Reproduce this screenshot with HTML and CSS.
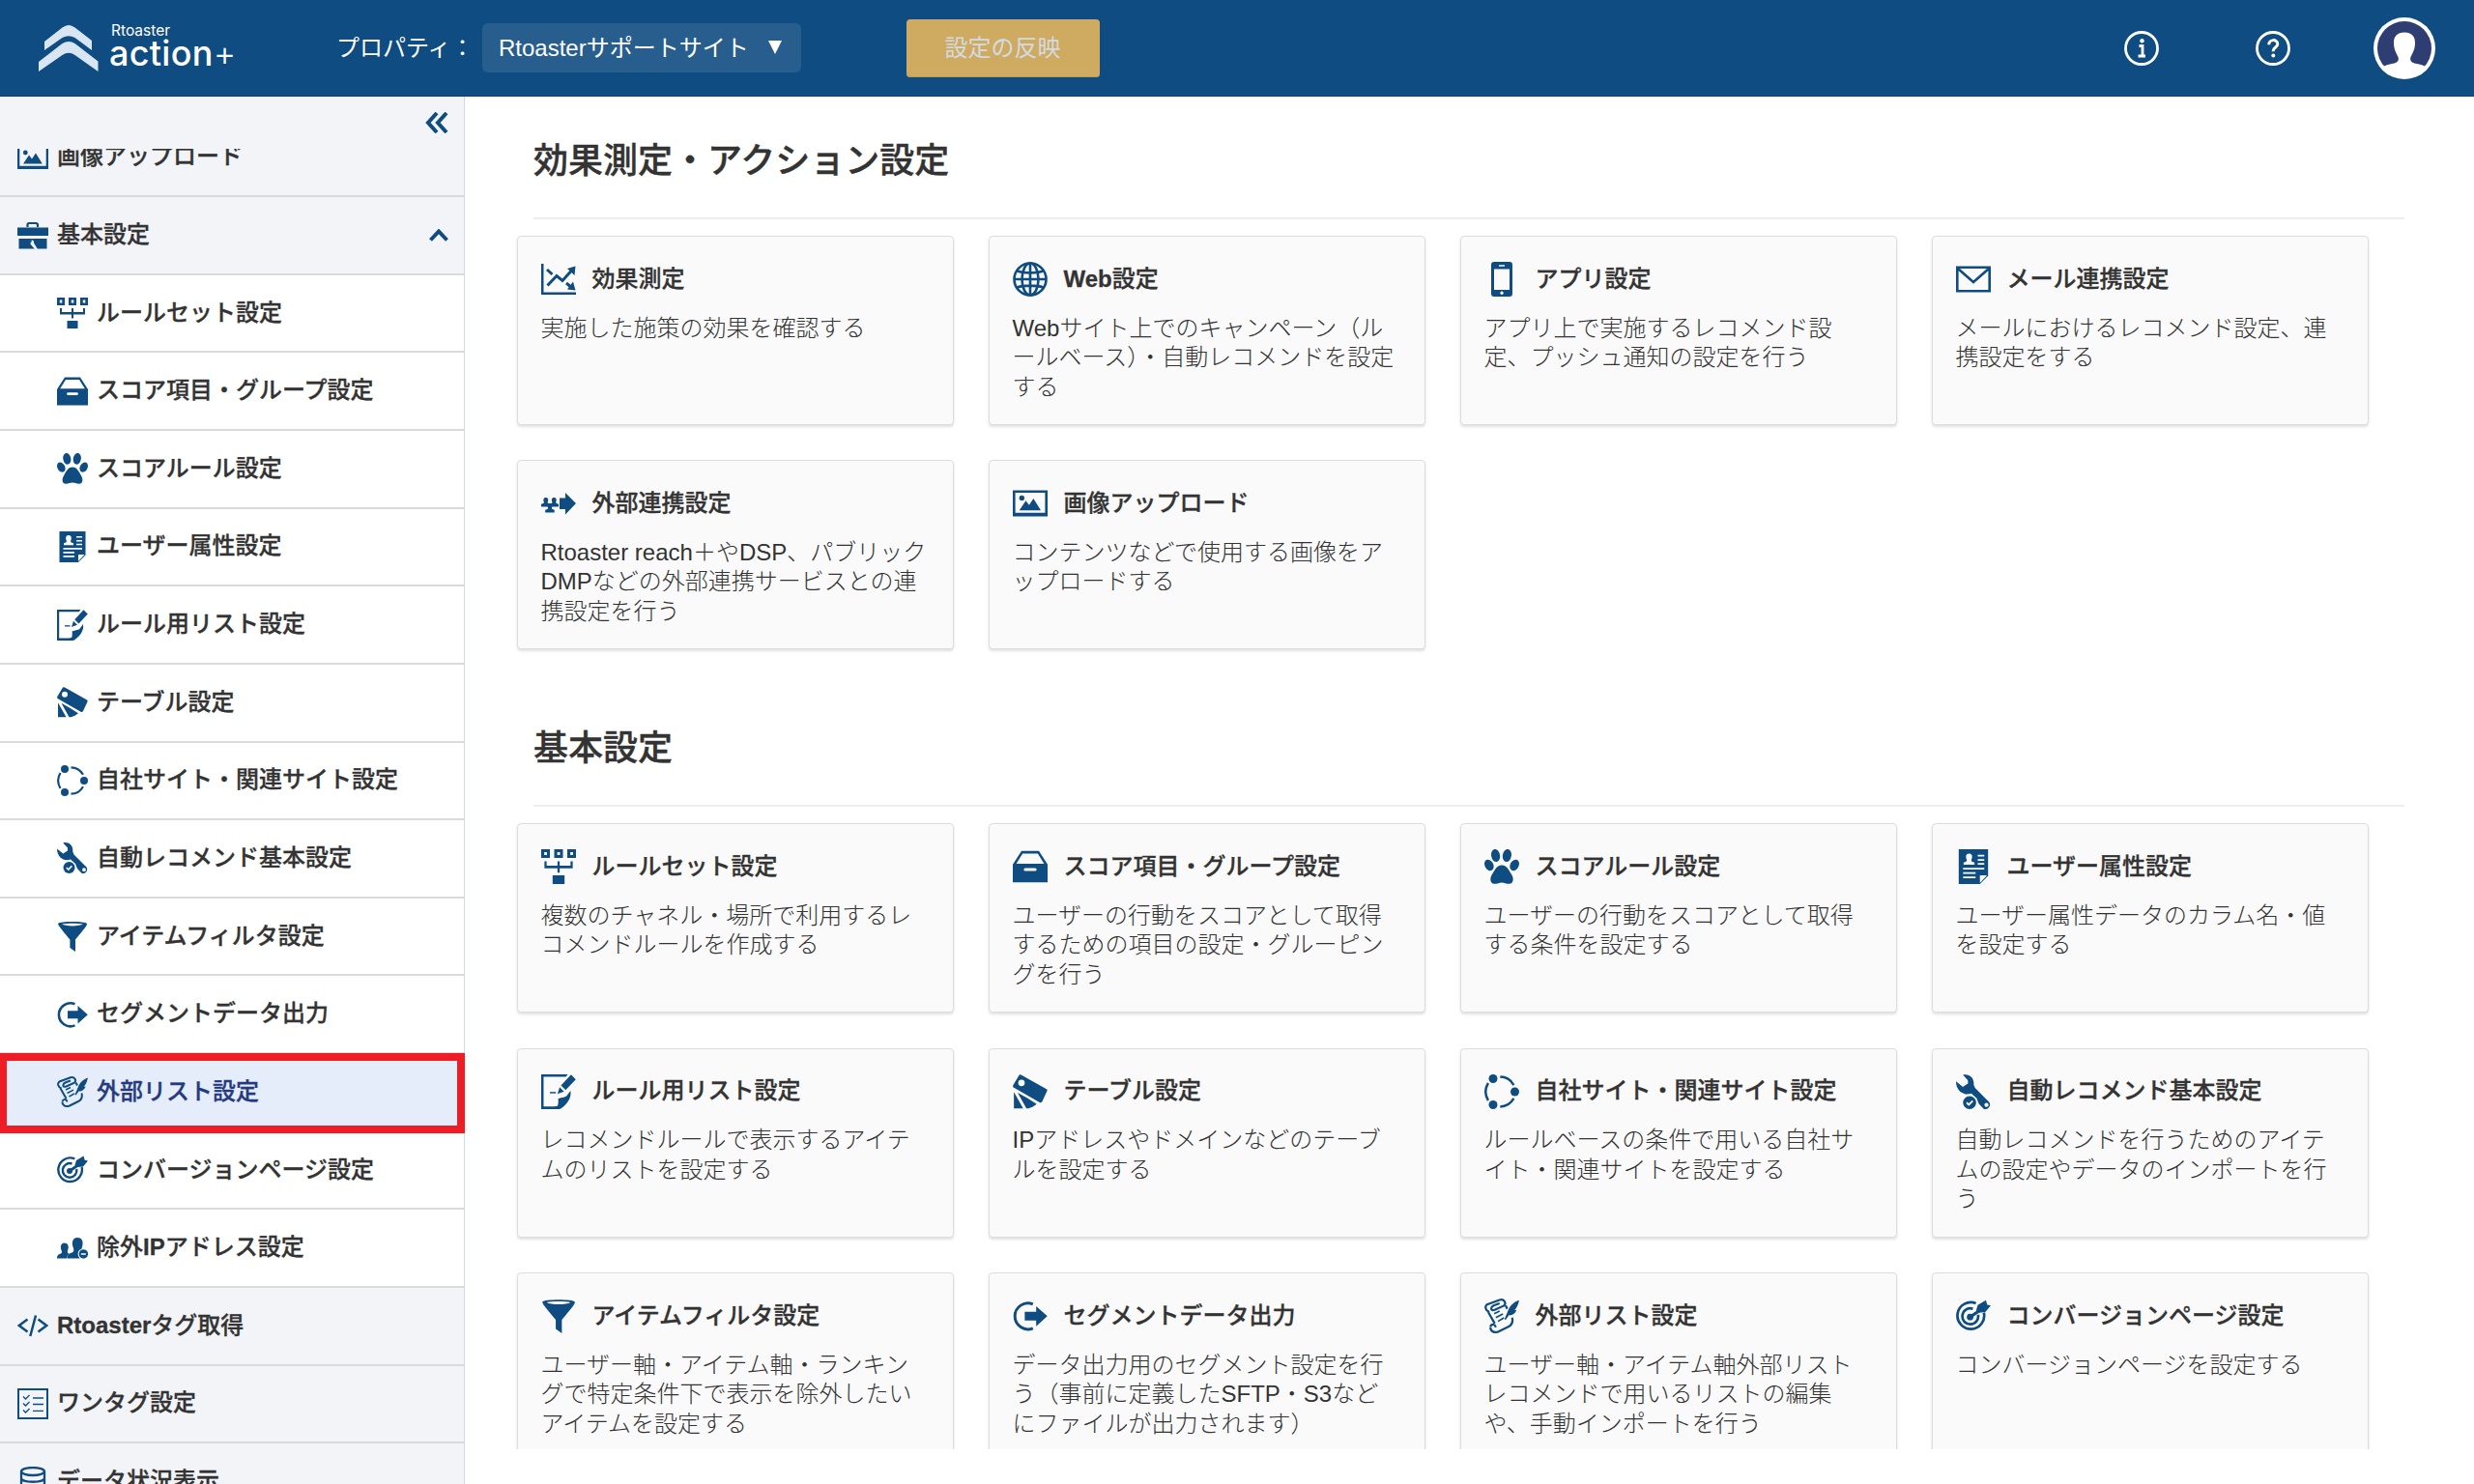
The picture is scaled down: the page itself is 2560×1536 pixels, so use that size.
FILE: index.html
```
<!DOCTYPE html>
<html lang="ja">
<head>
    <meta charset="UTF-8">
    <meta name="viewport" content="width=device-width, initial-scale=1.0">
    <title>Rtoaster action+</title>
    <link rel="stylesheet" href="styles.css">
</head>
<body>

    <!-- Icon set -->
    <svg class="icon-set" aria-hidden="true">
        <symbol id="i-ruleset" viewBox="0 0 32 32">
            <path fill-rule="evenodd" d="M0 0h8v8H0zM2.8 2.6v2.8h2.5V2.6zM12 0h8v8h-8zM14.8 2.6v2.8h2.5V2.6zM24 0h8v8h-8zM26.8 2.6v2.8h2.5V2.6z"/>
            <path d="M3 11h2v4h10v-4h2v4h10v-4h2v6.5H17v4h-2v-4H3zM10.5 24h11v8h-11z"/>
        </symbol>
        <symbol id="i-box" viewBox="0 0 32 32">
            <path fill-rule="evenodd" d="M8 1.500h16l8 12.500v16.500H0V14zM9 4L3.200 13.300h25.600L23 4zM11.500 17.300a1.400 1.400 0 0 0 0 2.800h9a1.400 1.400 0 0 0 0-2.800z"/>
        </symbol>
        <symbol id="i-paw" viewBox="0 0 32 32">
            <ellipse cx="10.300" cy="5.800" rx="4" ry="5.900" transform="rotate(-10 10.300 5.800)"/>
            <ellipse cx="20.800" cy="5.800" rx="4" ry="5.900" transform="rotate(10 20.800 5.800)"/>
            <ellipse cx="4.300" cy="14.600" rx="3.900" ry="5.400" transform="rotate(-28 4.300 14.600)"/>
            <ellipse cx="27.700" cy="14.600" rx="3.900" ry="5.400" transform="rotate(28 27.700 14.600)"/>
            <path d="M16 14.600c5 0 6.500 5 8.800 8.300 2.600 3.800 2 8.600-1.800 8.900-2.500.2-4.500-1.200-7-1.200s-4.500 1.400-7 1.200c-3.800-.3-4.400-5.100-1.800-8.900C9.500 19.600 11 14.600 16 14.600z"/>
        </symbol>
        <symbol id="i-user" viewBox="0 0 32 32">
            <path d="M2.500 0h27v24.500L22 32H2.500z"/>
            <path class="hole" d="M12 4c3.200 0 3.300 3.200 2.200 5.600-.4 1.500.2 2 2.800 2.600v2H7v-2c2.600-.6 3.200-1.100 2.800-2.600C8.700 7.200 8.800 4 12 4zM20 5h6v1.600h-6zM20 9h6v1.600h-6zM20 12.700h6v1.600h-6zM6.500 17H26v1.700H6.500zM6.500 21H18v1.700H6.500zM6.500 25H18v1.700H6.500zM22 31v-7h6.500z"/>
        </symbol>
        <symbol id="i-edit" viewBox="0 0 32 32">
            <path d="M0 0h24.500l-1.800 2.200H2.200v27.400H12l3-.6c1-1.500.8-4.500.6-6.500 3.500-1.500 7.500-1 8.800-4l2.600-3.500c1 7-3 12-9 16.500-1 .5-2 .5-3 .5H0z"/>
            <path d="M27.500.3L31.800 4.600 22.500 14.400 18.200 10.200zM17 11.700l4 4-6 2.400z"/>
            <path d="M8 16.200h5.500v1.300H8z"/>
        </symbol>
        <symbol id="i-swatch" viewBox="0 0 32 32">
            <path fill-rule="evenodd" d="M6 .5Q7 0 8 .6L31 13.500Q32 14.200 31.500 15.300L27 25Q26 26.300 24.600 25.700L1 12.300Q-.3 11.500.3 10zM8 4.800a3 3 0 1 0 0 6 3 3 0 1 0 0-6z"/>
            <path d="M1 16.300L9.500 31.300H1zM4.500 16.800l8.800 5L22 27.300l-3.500 2.500-4 1.500h-2z"/>
        </symbol>
        <symbol id="i-sites" viewBox="0 0 32 32">
            <circle cx="8" cy="4" r="4"/><circle cx="28" cy="16" r="4"/><circle cx="8" cy="28" r="4"/>
            <path class="line" stroke-width="2.200" d="M14.500 2.300C20 2.300 24.500 5.500 27 9.800M27 22.200C24.500 26.500 20 29.700 14.500 29.700M3.500 8C.5 13 .5 19 3.500 24"/>
        </symbol>
        <symbol id="i-wrench" viewBox="0 0 32 32">
            <path fill-rule="evenodd" d="M6.300.4C12-1 17 3 16.300 9.500l1.200 3L30.500 25.500a4.200 4.200 0 0 1-5 6.200L21 27l-2-5-5-4.500C8 20 0 16 0 6.500L6.300 11.500 11 8.500V5.500zM28 26.300a1.900 1.900 0 1 0 0 3.800 1.900 1.900 0 1 0 0-3.800z"/>
            <circle cx="12.500" cy="26" r="7" class="hole"/>
            <circle cx="12.500" cy="26" r="6"/>
            <path class="hole-line" d="M9.800 26l2 2 3.600-3.700"/>
        </symbol>
        <symbol id="i-filter" viewBox="0 0 32 32">
            <path fill-rule="evenodd" d="M1 3C3 .4 29 .4 31 3c0 2-1 3.500-12 16.500V32l-5.600-4V19.500C3 7 1.500 5 1 3zM5 3.600C9 6 23 6 27 3.600 22 2.300 10 2.300 5 3.600z"/>
        </symbol>
        <symbol id="i-export" viewBox="0 0 32 32">
            <path class="line" stroke-width="2.600" d="M18.500 5.200A12 12 0 1 0 18.500 27.400"/>
            <path d="M11 12.200h10.500V7L31.800 16.200 21.500 25.500V20.300H11z"/>
        </symbol>
        <symbol id="i-scroll" viewBox="0 0 32 32">
            <g class="line" stroke-width="2">
                <path d="M4.500 12.500C1 11 0 7.500 2.500 5.500L14 1.300c4-1.300 6.500 3 4 5.300L9.500 10.500C5.500 12 5.500 8 8.500 6.500L14 4.500"/>
                <path d="M3.500 12.500L9.500 23M19.500 6.500L21 9.500M5.500 26c1-3 5-2.500 4.600.5M5.500 26.500c0 4 4 5.500 7.500 4L22 26c3-1.500 4.500-4.500 3.500-8.500"/>
            </g>
            <path class="line" stroke-width="1.500" d="M9 14l5-2.500M10.500 17.500l6.500-3.300M12.500 21l5.500-3.200"/>
            <path d="M32 1.500c-3 .8-7 3.500-9 7-1.500 3-2 5-4.500 10.500l1.200.6 2.800-4.200c2.500.6 6.500-2 7-5l-1.800.4c2-2 3.500-5.300 4.300-9.300z"/>
        </symbol>
        <symbol id="i-target" viewBox="0 0 32 32">
            <g class="line" stroke-width="2.400">
                <path d="M18.300 4.400A12.300 12.300 0 1 0 25.600 13"/>
                <path d="M15.500 9.500A7.300 7.300 0 1 0 20.300 15"/>
                <path stroke-width="2.800" d="M13 17L24 9.500"/>
            </g>
            <circle cx="13" cy="17" r="3"/>
            <path d="M18.500 11l1.500-5 7.500-4.500 1.200 4.300 3.300.7-5 6-6 .5z"/>
        </symbol>
        <symbol id="i-exclude" viewBox="0 0 32 32">
            <path d="M7.500 10.500c4.500 0 5 4.500 3.500 8-.7 2 0 2.700 2.500 3.500l-2.500 1-1 3.500H0c0-3.500 1.500-4 4-5 1.500-.8 1-2 .5-3.500-1.300-3.500-.5-7.500 3-7.500z"/>
            <path d="M21 5c5.500 0 6.500 5 5 9.500-.5 1.500-.8 2.500.3 3.300-3.300 1.200-4.300 5-2.600 8.700H10.500c0-4 2-5 5.500-6.300 1.500-.7 1.500-2.700 1-4.200C15 11 15.500 5 21 5z"/>
            <circle class="hole" cx="27.300" cy="21.900" r="5.700"/>
            <path fill-rule="evenodd" d="M27.300 17.200a4.700 4.700 0 1 0 .1 0zM24.800 21.200h5v1.500h-5z"/>
        </symbol>
        <symbol id="i-image" viewBox="0 0 32 32">
            <path fill-rule="evenodd" d="M0 4h32v24H0zM2.300 6.200v18.500h27.400V6.200z"/>
            <circle cx="8.300" cy="11" r="2.400"/>
            <path d="M6 22.500L12 13.500l3 4 4-6 6.800 11z"/>
        </symbol>
        <symbol id="i-toolbox" viewBox="0 0 32 32">
            <path class="line" stroke-width="2.200" d="M10.500 8V5.500Q10.500 4 12 4h7Q21 4 21 5.500V8"/>
            <path d="M0 8.500h32v8.500H0zM1.500 20h29V30.500h-29z"/>
            <path class="hole" d="M12 21l2 2.500-.6 2L18 31h3l-4-6.500c.5-2-1-3-2.500-3.300l.5 2-1.200.4z"/>
        </symbol>
        <symbol id="i-code" viewBox="0 0 32 32">
            <path class="line" stroke-width="2.500" d="M10.500 9.500L1.800 16l8.700 6.500M21.500 9.500L30.200 16l-8.700 6.500M19 5.500L13.300 27"/>
        </symbol>
        <symbol id="i-checklist" viewBox="0 0 32 32">
            <path class="line" stroke-width="2" d="M1 1h30v30H1z"/>
            <path class="line" stroke-width="1.300" d="M6 8.500l2.500 2.500 4-4M6 15.500l2.500 2.500 4-4M6 22.500l2.500 2.500 4-4M16 10h11M16 16.500h11M16 23.300h11"/>
        </symbol>
        <symbol id="i-db" viewBox="0 0 32 32">
            <g class="line" stroke-width="2.300">
                <ellipse cx="16" cy="5" rx="12" ry="4"/>
                <path d="M4 5v22c0 5 24 5 24 0V5M4 12c0 5 24 5 24 0M4 19.500c0 5 24 5 24 0"/>
            </g>
        </symbol>
        <symbol id="i-chart" viewBox="0 0 36 36">
            <path d="M0 2h2.500v29.500H36V34H0z"/>
            <path class="line" stroke-width="3" d="M6.500 24.500L16 14.500l6 5L31.500 9M6 8l5.500 5M26 22l6 5"/>
            <path d="M35.500 4.500l-1 9.500-7.500-7zM35.500 29.500l-8.500-1 6-8z"/>
        </symbol>
        <symbol id="i-globe" viewBox="0 0 36 36">
            <g class="line" stroke-width="2.600">
                <circle cx="18" cy="18" r="16.500"/>
                <ellipse cx="18" cy="18" rx="8.500" ry="16.500"/>
                <path d="M18 1v34M1 18h34M4.500 9.500C11 12 25 12 31.500 9.500M4.500 26.500C11 24 25 24 31.500 26.500"/>
            </g>
        </symbol>
        <symbol id="i-phone" viewBox="0 0 36 36">
            <path fill-rule="evenodd" d="M10 0h16a3 3 0 0 1 3 3v30a3 3 0 0 1-3 3H10a3 3 0 0 1-3-3V3a3 3 0 0 1 3-3zM10 7.500v21.500h16V7.500zM15 3.200v1.600h6V3.200zM18 30.500a1.700 1.700 0 1 0 .1 0z"/>
        </symbol>
        <symbol id="i-mail" viewBox="0 0 36 36">
            <path class="line" stroke-width="2.600" d="M1.300 5.800h33.400v24.400H1.300zM2 7l16 14L34 7"/>
        </symbol>
        <symbol id="i-link" viewBox="0 0 36 36">
            <path id="person" d="M4.800 12c2.600 0 2.900 2.500 2 4.500-.4 1.200.2 1.600 2.700 2.200v2.800H0v-2.800c2.600-.6 3.200-1 2.800-2.200C2 14.500 2.200 12 4.800 12z"/>
            <use href="#person" x="8.500"/>
            <use href="#person" x="4.200" y="6"/>
            <path d="M19 12.500h6V7L36 18 25 29.500V24h-6z"/>
        </symbol>
    </svg>

    <!-- Header -->
    <header class="header">
        <div class="logo">
            <svg class="logo-mark" viewBox="0 0 62 48">
                <path d="M6 17L24.500 2.500Q31-2.500 37.500 2.500L55 16V26L37.500 13Q31 9.500 24.500 13L6 26z"/>
                <path d="M0 38L24.500 19Q31 15 37.500 19L61.500 37.500V48L37.500 31Q31 26.500 24.500 31L0 48z"/>
            </svg>
            <div class="logo-text">
                <span class="logo-small">Rtoaster</span>
                <span class="logo-large">action<span class="plus">+</span></span>
            </div>
        </div>
        <div class="property">
            <span>プロパティ：</span>
            <div class="property-select"><span>Rtoasterサポートサイト</span><i class="caret"></i></div>
        </div>
        <button class="btn-apply" disabled>設定の反映</button>
        <div class="header-icons">
            <svg class="round-icon" viewBox="0 0 36 36">
                <circle cx="18" cy="18" r="16.500"/>
                <circle class="dot" cx="18.500" cy="10.300" r="2.200"/>
                <path d="M15.500 15.500h3.500v10M14.500 26h7.500"/>
            </svg>
            <svg class="round-icon" viewBox="0 0 36 36">
                <circle cx="18" cy="18" r="16.500"/>
                <path stroke-width="3" d="M13.800 14.300c0-6.400 9-5.800 9-.8 0 3.800-4.800 3.200-4.800 7.700"/>
                <circle class="dot" cx="18.300" cy="25.600" r="2"/>
            </svg>
            <svg class="avatar" viewBox="0 0 64 64">
                <circle cx="32" cy="32" r="32" fill="#fff"/>
                <circle cx="32" cy="32" r="28" fill="#2e3e73"/>
                <path fill="#fff" d="M32 15.500c8 0 11.500 5 11 12-.4 6.500-2.500 9-4.500 13.500-1 3 0 5.500 4 6.500 5 1 9 1.500 12 4A28.500 28.500 0 0 1 9.500 51.500c3-2.500 7-3 12-4 4-1 5-3.500 4-6.500-2-4.500-4.100-7-4.500-13.500-.5-7 3-12 11-12z"/>
            </svg>
        </div>
    </header>

    <div class="layout">

        <!-- Side menu -->
        <aside class="sidebar">
            <div class="sidebar-toggle">
                <svg viewBox="0 0 24 22"><path d="M12 1L3 11l9 10M22 1l-9 10 9 10"/></svg>
            </div>
            <nav class="menu">
                <ul class="menu-list">
                    <li class="top"><svg class="icon"><use href="#i-image"/></svg><span>画像アップロード</span></li>
                    <li class="top"><svg class="icon"><use href="#i-toolbox"/></svg><span>基本設定</span><svg class="chevron" viewBox="0 0 20 13"><path d="M1.500 11.500L10 2.500l8.500 9"/></svg></li>
                    <li><svg class="icon"><use href="#i-ruleset"/></svg><span>ルールセット設定</span></li>
                    <li><svg class="icon"><use href="#i-box"/></svg><span>スコア項目・グループ設定</span></li>
                    <li><svg class="icon"><use href="#i-paw"/></svg><span>スコアルール設定</span></li>
                    <li><svg class="icon"><use href="#i-user"/></svg><span>ユーザー属性設定</span></li>
                    <li><svg class="icon"><use href="#i-edit"/></svg><span>ルール用リスト設定</span></li>
                    <li><svg class="icon"><use href="#i-swatch"/></svg><span>テーブル設定</span></li>
                    <li><svg class="icon"><use href="#i-sites"/></svg><span>自社サイト・関連サイト設定</span></li>
                    <li><svg class="icon"><use href="#i-wrench"/></svg><span>自動レコメンド基本設定</span></li>
                    <li><svg class="icon"><use href="#i-filter"/></svg><span>アイテムフィルタ設定</span></li>
                    <li><svg class="icon"><use href="#i-export"/></svg><span>セグメントデータ出力</span></li>
                    <li class="active"><svg class="icon"><use href="#i-scroll"/></svg><span>外部リスト設定</span></li>
                    <li><svg class="icon"><use href="#i-target"/></svg><span>コンバージョンページ設定</span></li>
                    <li><svg class="icon"><use href="#i-exclude"/></svg><span>除外<b>IP</b>アドレス設定</span></li>
                    <li class="top"><svg class="icon"><use href="#i-code"/></svg><span><b>Rtoaster</b>タグ取得</span></li>
                    <li class="top"><svg class="icon"><use href="#i-checklist"/></svg><span>ワンタグ設定</span></li>
                    <li class="top"><svg class="icon"><use href="#i-db"/></svg><span>データ状況表示</span></li>
                </ul>
            </nav>
        </aside>

        <!-- Contents -->
        <main class="content">
            <section>
                <h2>効果測定・アクション設定</h2>
                <div class="cards">
                    <div class="card">
                        <h3><svg class="icon"><use href="#i-chart"/></svg><span>効果測定</span></h3>
                        <p>実施した施策の効果を確認する</p>
                    </div>
                    <div class="card">
                        <h3><svg class="icon"><use href="#i-globe"/></svg><span><b>Web</b>設定</span></h3>
                        <p>Webサイト上でのキャンペーン（ル<br>ールベース）・自動レコメンドを設定<br>する</p>
                    </div>
                    <div class="card">
                        <h3><svg class="icon"><use href="#i-phone"/></svg><span>アプリ設定</span></h3>
                        <p>アプリ上で実施するレコメンド設<br>定、プッシュ通知の設定を行う</p>
                    </div>
                    <div class="card">
                        <h3><svg class="icon"><use href="#i-mail"/></svg><span>メール連携設定</span></h3>
                        <p>メールにおけるレコメンド設定、連<br>携設定をする</p>
                    </div>
                    <div class="card">
                        <h3><svg class="icon"><use href="#i-link"/></svg><span>外部連携設定</span></h3>
                        <p>Rtoaster reach＋やDSP、パブリック<br>DMPなどの外部連携サービスとの連<br>携設定を行う</p>
                    </div>
                    <div class="card">
                        <h3><svg class="icon"><use href="#i-image"/></svg><span>画像アップロード</span></h3>
                        <p>コンテンツなどで使用する画像をア<br>ップロードする</p>
                    </div>
                </div>
            </section>
            <section>
                <h2>基本設定</h2>
                <div class="cards">
                    <div class="card">
                        <h3><svg class="icon"><use href="#i-ruleset"/></svg><span>ルールセット設定</span></h3>
                        <p>複数のチャネル・場所で利用するレ<br>コメンドルールを作成する</p>
                    </div>
                    <div class="card">
                        <h3><svg class="icon"><use href="#i-box"/></svg><span>スコア項目・グループ設定</span></h3>
                        <p>ユーザーの行動をスコアとして取得<br>するための項目の設定・グルーピン<br>グを行う</p>
                    </div>
                    <div class="card">
                        <h3><svg class="icon"><use href="#i-paw"/></svg><span>スコアルール設定</span></h3>
                        <p>ユーザーの行動をスコアとして取得<br>する条件を設定する</p>
                    </div>
                    <div class="card">
                        <h3><svg class="icon"><use href="#i-user"/></svg><span>ユーザー属性設定</span></h3>
                        <p>ユーザー属性データのカラム名・値<br>を設定する</p>
                    </div>
                    <div class="card">
                        <h3><svg class="icon"><use href="#i-edit"/></svg><span>ルール用リスト設定</span></h3>
                        <p>レコメンドルールで表示するアイテ<br>ムのリストを設定する</p>
                    </div>
                    <div class="card">
                        <h3><svg class="icon"><use href="#i-swatch"/></svg><span>テーブル設定</span></h3>
                        <p>IPアドレスやドメインなどのテーブ<br>ルを設定する</p>
                    </div>
                    <div class="card">
                        <h3><svg class="icon"><use href="#i-sites"/></svg><span>自社サイト・関連サイト設定</span></h3>
                        <p>ルールベースの条件で用いる自社サ<br>イト・関連サイトを設定する</p>
                    </div>
                    <div class="card">
                        <h3><svg class="icon"><use href="#i-wrench"/></svg><span>自動レコメンド基本設定</span></h3>
                        <p>自動レコメンドを行うためのアイテ<br>ムの設定やデータのインポートを行<br>う</p>
                    </div>
                    <div class="card">
                        <h3><svg class="icon"><use href="#i-filter"/></svg><span>アイテムフィルタ設定</span></h3>
                        <p>ユーザー軸・アイテム軸・ランキン<br>グで特定条件下で表示を除外したい<br>アイテムを設定する</p>
                    </div>
                    <div class="card">
                        <h3><svg class="icon"><use href="#i-export"/></svg><span>セグメントデータ出力</span></h3>
                        <p>データ出力用のセグメント設定を行<br>う（事前に定義したSFTP・S3など<br>にファイルが出力されます）</p>
                    </div>
                    <div class="card">
                        <h3><svg class="icon"><use href="#i-scroll"/></svg><span>外部リスト設定</span></h3>
                        <p>ユーザー軸・アイテム軸外部リスト<br>レコメンドで用いるリストの編集<br>や、手動インポートを行う</p>
                    </div>
                    <div class="card">
                        <h3><svg class="icon"><use href="#i-target"/></svg><span>コンバージョンページ設定</span></h3>
                        <p>コンバージョンページを設定する</p>
                    </div>
                </div>
            </section>
        </main>
    </div>

</body>
</html>
```
FILE: styles.css
```
/* Reset default styles */
*,
*::after {
    margin: 0;
    padding: 0;
    box-sizing: border-box;
}

body {
    font-family: "Liberation Sans", "Noto Sans CJK JP", sans-serif;
    font-size: 24px;
    color: #333;
    background-color: #fff;
    height: 1536px;
    overflow: hidden;
}

.icon-set {
    display: none;
}

.icon {
    --hole: #fff;
    fill: #0f4c81;
    flex: none;
}

.line {
    fill: none;
    stroke: #0f4c81;
}

.hole {
    fill: var(--hole);
}

.hole-line {
    fill: none;
    stroke: var(--hole);
    stroke-width: 1.6;
}

/* Header */
.header {
    display: flex;
    align-items: center;
    height: 100px;
    padding: 0 40px;
    background-color: #0f4c81;
    border-bottom: 1px solid #0c4272;
    color: #fff;
}

.logo {
    display: flex;
    width: 308px;
    gap: 11px;
}

.logo-mark {
    width: 62px;
    height: 48px;
    fill: #d8e5f2;
}

.logo-text {
    display: flex;
    flex-direction: column;
    height: 48px;
    margin-top: -2px;
    font-family: Inter, "Liberation Sans", sans-serif;
}

.logo-small {
    font-size: 15.5px;
    line-height: 15px;
    padding-left: 2px;
}

.logo-large {
    font-size: 36px;
    line-height: 32px;
    font-weight: 500;
    letter-spacing: 0.3px;
    white-space: nowrap;
}

.plus {
    font-weight: 300;
}

.property {
    display: flex;
    align-items: center;
    width: 589.5px;
}

.property > span {
    width: 151px;
    padding-bottom: 4px;
    white-space: nowrap;
}

.property-select {
    display: flex;
    align-items: center;
    justify-content: space-between;
    width: 330px;
    height: 51px;
    padding: 0 20px 0 17px;
    border-radius: 6px;
    background-color: #285e8e;
    white-space: nowrap;
}

.property-select span {
    padding-bottom: 4px;
}

.caret {
    margin-bottom: 2px;
    border: 7px solid transparent;
    border-top: 14px solid #fff;
    border-bottom: 0;
}

.btn-apply {
    width: 200px;
    height: 60px;
    padding-bottom: 4px;
    border: none;
    border-radius: 4px;
    background-color: #cfaa61;
    box-shadow: inset 0 -1px 0 #b89a5c;
    color: #d3dbe0;
    font: inherit;
}

.header-icons {
    display: flex;
    align-items: center;
    margin-left: auto;
}

.round-icon {
    width: 36px;
    height: 36px;
    margin-right: 100px;
    fill: none;
    stroke: #fff;
    stroke-width: 2.8;
}

.round-icon + .avatar {
    margin-left: -14px;
}

.round-icon .dot {
    fill: #fff;
    stroke: none;
}

.avatar {
    width: 64px;
    height: 64px;
}

.layout {
    display: flex;
    height: 1436px;
}

/* Side menu */
.sidebar {
    display: flex;
    flex-direction: column;
    width: 481px;
    flex: none;
    border-right: 1px solid #d0d8e6;
    background-color: #f2f4f8;
}

.sidebar-toggle {
    display: flex;
    justify-content: flex-end;
    height: 54px;
    padding: 16px 16px 0 0;
}

.sidebar-toggle svg {
    width: 24px;
    height: 22px;
}

.sidebar-toggle path,
.chevron path {
    fill: none;
    stroke: #0f4c81;
    stroke-width: 4;
}

.menu {
    flex: 1;
    min-height: 0;
    overflow-x: visible;
    overflow-y: clip;
}

/* list is scrolled down a little */
.menu-list {
    margin-top: -30.6px;
    list-style: none;
}

.menu li {
    display: flex;
    align-items: center;
    position: relative;
    height: 80.65px;
    padding: 0 0 6px 59px;
    border-bottom: 2px solid #dadada;
    background-color: #fff;
    font-weight: 500;
    -webkit-text-stroke: 0.3px;
    white-space: nowrap;
}

.menu li.top {
    padding-left: 18px;
    background-color: #f2f4f8;
}

.menu .icon {
    width: 32px;
    height: 32px;
    margin: 0 9px -6px 0;
}

.menu li.top .icon {
    --hole: #f2f4f8;
}

.menu li.active {
    z-index: 1;
    background-color: #e6edfa;
    color: #243a80;
}

.menu li.active .icon {
    --hole: #e6edfa;
}

.menu li.active::after {
    content: "";
    position: absolute;
    top: -1px;
    left: 0;
    width: 481px;
    height: 83px;
    border: 8px solid #ee1c25;
    border-left-width: 7px;
}

.chevron {
    width: 20px;
    height: 13px;
    margin: 0 16px -6px auto;
}

/* Contents */
.content {
    flex: 1;
    height: 1400px;
    padding-left: 54px;
    overflow: hidden;
}

.content h2 {
    width: 1936px;
    height: 127px;
    margin-left: 17px;
    padding-top: 32px;
    border-bottom: 2px solid #eee;
    font-size: 36px;
    font-weight: 500;
    line-height: 70px;
    -webkit-text-stroke: 0.4px;
}

.cards {
    display: grid;
    grid-template-columns: repeat(4, 452px);
    gap: 36.4px 36px;
    padding: 17px 0 36px;
}

.card {
    height: 196px;
    padding: 26px 0 0 23.5px;
    border: 1px solid #ddd;
    border-radius: 4px;
    background-color: #fafafa;
    box-shadow: 0 2px 3px rgba(0, 0, 0, 0.12);
    white-space: nowrap;
}

.card h3 {
    display: flex;
    align-items: center;
    height: 36px;
    padding-bottom: 6px;
    font-size: 24px;
    font-weight: 500;
    -webkit-text-stroke: 0.3px;
}

.card .icon {
    --hole: #fafafa;
    width: 36px;
    height: 36px;
    margin: 0 17px -6px 0;
}

.card p {
    margin-top: 17.5px;
    font-weight: 300;
    line-height: 30.6px;
}
```
